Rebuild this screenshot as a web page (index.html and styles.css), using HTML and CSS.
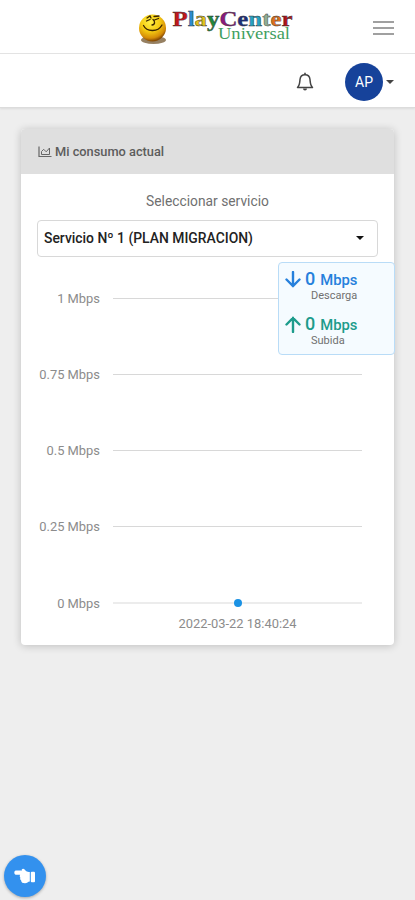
FILE: index.html
```html
<!DOCTYPE html>
<html lang="es">
<head>
    <meta charset="UTF-8">
    <meta name="viewport" content="width=device-width, initial-scale=1.0">
    <title>PlayCenter Universal - Mi consumo</title>
    <link rel="stylesheet" href="styles.css">
</head>
<body>

<header class="top-bar">
    <svg class="logo" width="160" height="46" viewBox="0 0 160 46">
        <defs>
            <radialGradient id="face" cx="42%" cy="28%" r="70%">
                <stop offset="0" stop-color="#fff045"/>
                <stop offset="0.5" stop-color="#f5cb12"/>
                <stop offset="0.85" stop-color="#d58c08"/>
                <stop offset="1" stop-color="#8a4d04"/>
            </radialGradient>
        </defs>
        <ellipse cx="16.500" cy="37" rx="12.500" ry="4" fill="#6a4a20" opacity="0.7"/>
        <circle cx="15.500" cy="25" r="13.500" fill="url(#face)"/>
        <path d="M10 15l3-2 1 2M9.500 18l3.500-1.500M17 13.500l5-.5M17.500 17l4-1.500M16 16.500c2 1.500 2.500 5-1 5.500M6.500 22.500c3 6 14 7.500 18.500-.5" fill="none" stroke="#3a2500" stroke-width="1.300" stroke-linecap="round"/>
        <text class="brand" x="35.500" y="23" textLength="120" lengthAdjust="spacingAndGlyphs"><tspan fill="#c4161c">P</tspan><tspan fill="#2a8bd0">l</tspan><tspan fill="#e2c21c">a</tspan><tspan fill="#1f8a3c">y</tspan><tspan fill="#8c1a7c">C</tspan><tspan fill="#1c2f80">e</tspan><tspan fill="#25a3c4">n</tspan><tspan fill="#8fae94">t</tspan><tspan fill="#e0701a">e</tspan><tspan fill="#b01218">r</tspan></text>
        <text class="brand-sub" x="81" y="36" textLength="72" lengthAdjust="spacingAndGlyphs">Universal</text>
    </svg>
    <button class="menu-btn" aria-label="Menú"><span></span><span></span><span></span></button>
</header>

<nav class="user-bar">
    <svg class="bell" width="18" height="20" viewBox="0 0 18 20">
        <path d="M1.500 15.500C3.700 13.500 3.700 11 4 7.500 4.300 4.500 6.300 2.700 9 2.700s4.700 1.800 5 4.800c.3 3.500.3 6 2.500 8z" fill="none" stroke="#444" stroke-width="1.500" stroke-linejoin="round"/>
        <path d="M9 .8v2" stroke="#444" stroke-width="1.600"/>
        <path d="M7 16.500h4a2 2 0 0 1-4 0z" fill="#444"/>
    </svg>
    <span class="avatar">AP</span>
    <span class="caret"></span>
</nav>

<main class="card">
    <div class="card-header">
        <svg width="14" height="12" viewBox="0 0 14 12" fill="none" stroke="#666">
            <path d="M1 .5v10h12.500" stroke-width="1.200"/>
            <path d="M3.500 8.500v-3l2.200-2.200 2.500 2.500 3.300-3.800v6.500z" stroke-width="1"/>
        </svg>
        <h1>Mi consumo actual</h1>
    </div>
    <div class="card-body">
        <p class="label">Seleccionar servicio</p>
        <div class="select">
            <span>Servicio Nº 1 (PLAN MIGRACION)</span>
            <span class="caret"></span>
        </div>

        <div class="chart">
            <div class="row"><span class="tick">1 Mbps</span><span class="line"></span></div>
            <div class="row"><span class="tick">0.75 Mbps</span><span class="line"></span></div>
            <div class="row"><span class="tick">0.5 Mbps</span><span class="line"></span></div>
            <div class="row"><span class="tick">0.25 Mbps</span><span class="line"></span></div>
            <div class="row"><span class="tick">0 Mbps</span><span class="line base"><i class="point"></i></span></div>
            <div class="date">2022-03-22 18:40:24</div>
        </div>
    </div>

    <!-- Current speed, floats over the chart -->
    <div class="speed">
        <div class="down">
            <div class="value">
                <svg width="16" height="17" viewBox="0 0 16 17"><path d="M8 1v14M1.500 8.500L8 15l6.500-6.500"/></svg>
                <b>0</b><span>Mbps</span>
            </div>
            <small>Descarga</small>
        </div>
        <div class="up">
            <div class="value">
                <svg width="16" height="17" viewBox="0 0 16 17"><path d="M8 16V2M1.500 8.500L8 2l6.500 6.500"/></svg>
                <b>0</b><span>Mbps</span>
            </div>
            <small>Subida</small>
        </div>
    </div>
</main>

<button class="float-btn" aria-label="Acceso rápido">
    <svg width="22" height="17" viewBox="0 0 22 17" fill="#fff">
        <path d="M1.800 2.500H8l-.3-1C8.500.3 9.800.4 10.600 1.400L12 3c1 .8 2.500 1 3.800 1v9.500c-2 0-2.500 1.800-4.800 1.800-2.500 0-4-.8-3.800-2.800-1-.6-1.300-1.700-.8-2.700-.8-.9-.9-2-.2-3H1.800C-.2 6.300-.2 2.800 1.800 2.500z"/>
        <rect x="16.800" y="3.800" width="4.200" height="10.500" rx="1"/>
    </svg>
</button>

</body>
</html>
```

FILE: styles.css
```css
* {
    box-sizing: border-box;
    margin: 0;
    padding: 0;
}

body {
    font-family: Roboto, "Liberation Sans", sans-serif;
    min-height: 100vh;
    background: #eee;
    color: #555;
}

button {
    border: none;
    background: none;
    cursor: pointer;
}

/* Header */
.top-bar {
    display: flex;
    justify-content: space-between;
    align-items: center;
    height: 54px;
    padding: 0 21px 0 137px;
    background: #fff;
    border-bottom: 1px solid #e4e4e4;
}

.logo {
    margin-top: -2px;
}

.brand {
    font: bold 22px "Liberation Serif", serif;
    stroke: #333;
    stroke-width: 0.4px;
}

.brand-sub {
    font: 16px "Liberation Serif", serif;
    fill: #3fa060;
}

.menu-btn {
    display: flex;
    flex-direction: column;
    gap: 4px;
    width: 21px;
    margin-top: 2px;
}

.menu-btn span {
    height: 2px;
    background: #a0a0a0;
}

.user-bar {
    display: flex;
    justify-content: flex-end;
    align-items: center;
    height: 54px;
    padding: 2px 21px 0 0;
    background: #fff;
    border-bottom: 1px solid #dcdcdc;
    box-shadow: 0 1px 2px rgba(0, 0, 0, 0.08);
}

.avatar {
    display: flex;
    justify-content: center;
    align-items: center;
    width: 38px;
    height: 38px;
    margin: 0 3px 0 31px;
    border-radius: 50%;
    background: #16429a;
    color: #fff;
    font-size: 14px;
}

.caret {
    border: 4px solid transparent;
    border-top-color: #444;
    border-bottom: none;
}

/* Card */
.card {
    position: relative;
    width: 373px;
    height: 516px;
    margin: 21px 0 0 21px;
    border-radius: 4px;
    background: #fff;
    box-shadow: 0 1px 8px rgba(0, 0, 0, 0.2);
}

.card-header {
    display: flex;
    align-items: center;
    gap: 3px;
    height: 45px;
    padding-left: 17px;
    border-radius: 4px 4px 0 0;
    background: #dfdfdf;
}

.card-header h1 {
    font-size: 12.8px;
    font-weight: 500;
    color: #5c5c5c;
}

.card-body {
    padding: 18px 16px 0;
}

.label {
    font-size: 13.8px;
    line-height: 18px;
    text-align: center;
    color: #707070;
}

.select {
    display: flex;
    justify-content: space-between;
    align-items: center;
    height: 37px;
    margin-top: 10px;
    padding: 0 13px 2px 6px;
    border: 1px solid #d8d8d8;
    border-radius: 4px;
    color: #222;
    font-size: 13.9px;
    font-weight: 500;
}

.select .caret {
    border-top-color: #111;
}

/* Chart */
.chart {
    padding: 3px 16px 0 0;
    color: #8c8c8c;
    font-size: 12.9px;
}

.row {
    display: flex;
    align-items: center;
    height: 76.25px;
}

.tick {
    width: 63px;
    margin-right: 13px;
    text-align: right;
    white-space: nowrap;
}

.line {
    display: flex;
    justify-content: center;
    align-items: center;
    flex: 1;
    height: 1px;
    background: #d8d8d8;
}

.base {
    height: 2px;
    background: #ececec;
}

.point {
    flex: none;
    width: 8px;
    height: 8px;
    border-radius: 50%;
    background: #1b92e4;
}

.date {
    margin: -25px 0 0 76px;
    text-align: center;
    line-height: 16px;
}

/* Speed box */
.speed {
    position: absolute;
    top: 133px;
    right: -1px;
    width: 117px;
    height: 93px;
    padding: 6px;
    border: 1px solid #b9dcf7;
    border-radius: 4px;
    background: #f5fbff;
}

.value {
    display: flex;
    align-items: baseline;
    height: 20px;
    font-size: 14.8px;
    font-weight: 500;
    line-height: 20px;
}

.value svg {
    align-self: center;
    fill: none;
    stroke: currentColor;
    stroke-width: 2.4;
    stroke-linecap: round;
}

.value b {
    margin: 0 5px 0 4px;
    font-size: 18px;
    font-weight: 500;
}

.down {
    height: 45px;
    color: #2680dc;
}

.up {
    color: #1d9c8c;
}

.speed small {
    display: block;
    padding-left: 26px;
    color: #707070;
    font-size: 11px;
    line-height: 14px;
}

/* Floating button */
.float-btn {
    position: fixed;
    left: 4px;
    bottom: 3px;
    display: flex;
    justify-content: center;
    align-items: center;
    width: 42px;
    height: 42px;
    border-radius: 50%;
    background: #3391ee;
    box-shadow: 0 1px 3px rgba(0, 0, 0, 0.3);
}
```
